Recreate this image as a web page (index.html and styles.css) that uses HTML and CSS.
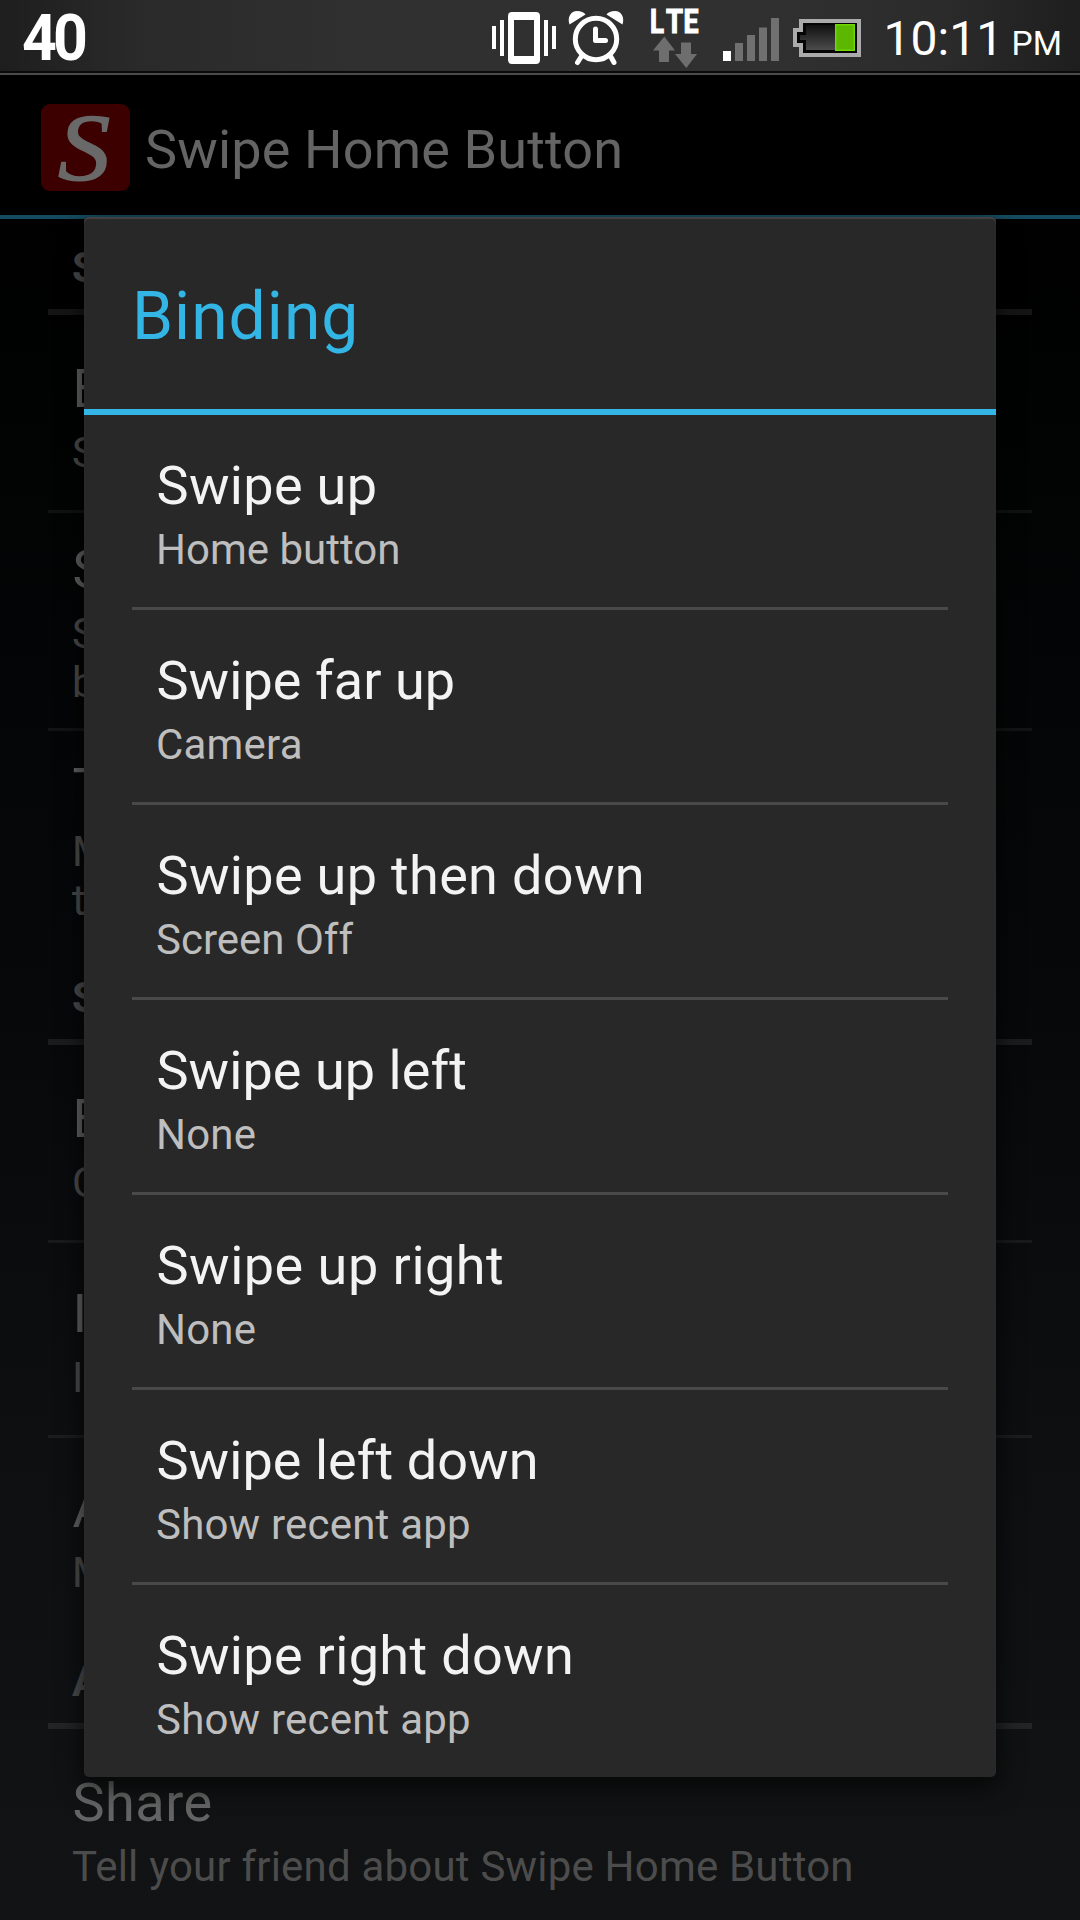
FILE: index.html
```html
<!DOCTYPE html>
<html lang="en">
<head>
<meta charset="utf-8">
<title>Swipe Home Button</title>
<link rel="stylesheet" href="styles.css">
</head>
<body>
<div class="screen">
  <header class="status">
    <span class="count">40</span>
    <div class="tray">
      <svg class="vibrate" width="64" height="71" viewBox="492 0 64 71">
        <path fill="#fff" d="M492 26h4v23h-4zM500 20h4v36h-4zM544 20h4v36h-4zM552 26h4v23h-4z"/>
        <path fill="#fff" fill-rule="evenodd" d="M512 12h24a4 4 0 0 1 4 4v44a4 4 0 0 1-4 4h-24a4 4 0 0 1-4-4V16a4 4 0 0 1 4-4zM514 20v36h20V20z"/>
      </svg>
      <svg class="alarm" width="56" height="71" viewBox="568 0 56 71">
        <path fill="#fff" d="M569.5 24.5C567 17 571 11 577 11c4 0 7 1.500 8.500 3.500zM622.500 24.500C625 17 621 11 615 11c-4 0-7 1.500-8.500 3.500z"/>
        <circle cx="596" cy="39" r="20.700" fill="none" stroke="#fff" stroke-width="5"/>
        <path fill="none" stroke="#fff" stroke-width="5" stroke-linecap="round" stroke-linejoin="round" d="M595.500 29v11.500h10M581 57l-3.500 5.500M611 57l3 5.500"/>
      </svg>
      <svg class="lte" width="48" height="71" viewBox="651 0 48 71">
        <g class="lte-text">
          <text x="650" y="33" textLength="14" lengthAdjust="spacingAndGlyphs">L</text>
          <text x="666" y="33" textLength="17" lengthAdjust="spacingAndGlyphs">T</text>
          <text x="683.500" y="33" textLength="15" lengthAdjust="spacingAndGlyphs">E</text>
        </g>
        <path fill="#6e6e6e" d="M664.300 36.500L675 50.500h-6V62h-10V50.500h-6zM681 42.500h10V54h6l-10.700 14L675 54h6z"/>
      </svg>
      <svg class="signal" width="56" height="71" viewBox="723 0 56 71">
        <path fill="#fff" d="M723 51h8v10h-8z"/>
        <path fill="#707070" d="M735 43h8v18h-8zM747 35h8v26h-8zM759 27.500h8V61h-8zM771 18h8v43h-8z"/>
      </svg>
      <svg class="battery" width="68" height="71" viewBox="793 0 68 71">
        <defs><linearGradient id="cell" x1="0" y1="0" x2="0" y2="1"><stop offset="0" stop-color="#101010"/><stop offset="1" stop-color="#4c4c4c"/></linearGradient></defs>
        <path fill="#ababab" d="M799 19h62v38h-62V47h-6V28h6z"/>
        <path fill="#050505" d="M803 23h54v30h-54V43h-6V32h6z"/>
        <path fill="url(#cell)" d="M806 25h29v25h-29V40h-6v-5h6z"/>
        <path fill="#6fd800" d="M835 24h20v27h-20z"/>
        <path fill="#5cb700" d="M836.500 25.500h17v24h-17z"/>
      </svg>
      <span class="clock">10:11</span><span class="ampm">PM</span>
    </div>
  </header>

  <div class="actionbar">
    <svg class="logo" width="89" height="87" viewBox="0 0 89 87">
      <rect width="89" height="87" rx="9" fill="#3d0000"/>
      <text class="logo-letter" transform="translate(17 76) scale(1.100 1)" x="0" y="0">S</text>
    </svg>
    <h1 class="app-title">Swipe Home Button</h1>
  </div>

  <main class="prefs">
    <h2 class="section">S</h2>
    <div class="pref"><div class="title">E</div><div class="summary">S</div></div>
    <div class="pref tall"><div class="title">S</div><div class="summary">S<br>b</div></div>
    <div class="pref tall last"><div class="title">T</div><div class="summary">M<br>t</div></div>
    <h2 class="section">S</h2>
    <div class="pref"><div class="title">E</div><div class="summary">C</div></div>
    <div class="pref"><div class="title">I</div><div class="summary">I</div></div>
    <div class="pref last"><div class="title">A</div><div class="summary">M</div></div>
    <h2 class="section">A</h2>
    <div class="pref last"><div class="title loose">Share</div><div class="summary wide">Tell your friend about Swipe Home Button</div></div>
  </main>

  <section class="dialog">
    <h2 class="dialog-title">Binding</h2>
    <div class="options">
      <div class="option"><div class="title">Swipe up</div><div class="summary">Home button</div></div>
      <div class="option"><div class="title tight">Swipe far up</div><div class="summary wide">Camera</div></div>
      <div class="option"><div class="title">Swipe up then down</div><div class="summary">Screen Off</div></div>
      <div class="option"><div class="title tight">Swipe up left</div><div class="summary wide">None</div></div>
      <div class="option"><div class="title loose">Swipe up right</div><div class="summary wide">None</div></div>
      <div class="option"><div class="title tight">Swipe left down</div><div class="summary wide">Show recent app</div></div>
      <div class="option"><div class="title">Swipe right down</div><div class="summary wide">Show recent app</div></div>
    </div>
  </section>
</div>
</body>
</html>
```
FILE: styles.css
```css
* { box-sizing: border-box; }

body {
  margin: 0;
  background: #000;
  font-family: Roboto, "Liberation Sans", sans-serif;
}

h1, h2 { margin: 0; font-weight: 400; }

.screen {
  position: relative;
  width: 1080px;
  height: 1920px;
  overflow: hidden;
  display: flex;
  flex-direction: column;
  background: linear-gradient(#000 200px, #020303 480px, #07080a 1000px, #0d0f10 1450px, #121314 1900px);
}

/* Status bar */
.status {
  flex: none;
  display: flex;
  justify-content: space-between;
  height: 75px;
  border-bottom: 2px solid #4b4b4b;
  background:
    linear-gradient(transparent 71px, #0a0a0a 71px),
    linear-gradient(90deg, #1e1e1e, #2a2a2a 140px, #303030 360px, #303030 780px, #2b2b2b 940px, #1e1e1e);
  color: #fff;
}

.count {
  margin-left: 22px;
  font-size: 64px;
  font-weight: 700;
  line-height: 77px;
  letter-spacing: -4px;
  transform: scaleX(.95);
  transform-origin: left;
}

.tray {
  display: flex;
  padding-right: 18px;
}

.tray svg { flex: none; overflow: visible; }
.alarm { margin-left: 12px; }
.lte { margin-left: 27px; }
.signal { margin-left: 24px; }
.battery { margin-left: 14px; }

.lte-text {
  fill: #fff;
  stroke: #fff;
  stroke-width: 1.2px;
  font-size: 34px;
  font-weight: 700;
}

.clock {
  width: 128px;
  margin-left: 23px;
  font-size: 48px;
  line-height: 78px;
}

.ampm {
  font-size: 33.5px;
  line-height: 88px;
}

/* Action bar */
.actionbar {
  flex: none;
  display: flex;
  height: 144px;
  padding-left: 41px;
  background: #000;
  border-bottom: 4px solid #164a5f;
}

.logo { margin-top: 29px; }

.logo-letter {
  fill: #696969;
  stroke: #696969;
  stroke-width: 1.5px;
  font-family: "Liberation Serif", serif;
  font-style: italic;
  font-size: 95px;
}

.app-title {
  padding: 5px 0 0 15px;
  color: #646464;
  font-size: 54px;
  line-height: 139px;
  letter-spacing: .15px;
}

/* Preference rows, shared by the page and the dialog */
.title {
  padding-left: .5px;
  font-size: 54px;
  line-height: 63px;
  letter-spacing: .33px;
}

.title.tight { letter-spacing: .05px; }
.title.loose { letter-spacing: .5px; }

.summary {
  margin-top: 8px;
  font-size: 42px;
  line-height: 49px;
}

.summary.wide { letter-spacing: .2px; }

.prefs { padding: 0 48px; }

.section {
  height: 99px;
  padding: 24px 24px 0;
  color: #4c4c4c;
  font-size: 42px;
  font-weight: 700;
  line-height: 49px;
  background: linear-gradient(#ffffff14, #ffffff14) 0 90px / 100% 6px no-repeat;
}

.pref {
  height: 195px;
  padding: 39px 24px 0;
  border-bottom: 3px solid #ffffff0f;
}

.pref.tall { height: 218px; padding-top: 25px; }
.pref.last { border-bottom-color: transparent; }
.pref .title { color: #646464; }
.pref .summary { color: #4c4c4c; }

/* Dialog */
.dialog {
  position: absolute;
  left: 84px;
  top: 217px;
  width: 912px;
  height: 1560px;
  border-radius: 5px;
  background: #282828;
  box-shadow: inset 0 2px 1px #424242, 0 8px 24px 2px rgba(0, 0, 0, .65);
}

.dialog-title {
  height: 198px;
  padding: 7px 48px 0;
  border-bottom: 6px solid #33b5e5;
  color: #33b5e5;
  font-size: 66px;
  line-height: 185px;
  letter-spacing: 1px;
}

.options { padding: 0 48px; }

.option {
  height: 195px;
  padding: 39px 24px 0;
  border-bottom: 3px solid #494949;
}

.option:last-child { height: 192px; border-bottom: 0; }
.option .title { color: #f3f3f3; }
.option .summary { color: #bebebe; }
```
